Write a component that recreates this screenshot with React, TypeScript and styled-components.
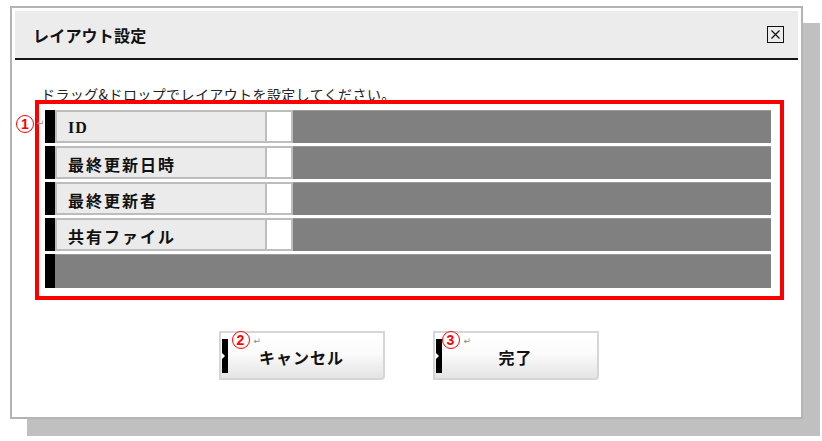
import styled, { createGlobalStyle } from "styled-components";

const GlobalStyle = createGlobalStyle`
  html, body {
    margin: 0;
    background: #fff;
    font-family: "Noto Sans CJK JP", "Noto Sans", sans-serif;
    color: #111;
  }
`;

const fields = ["ID", "最終更新日時", "最終更新者", "共有ファイル"];

export default function App() {
  return (
    <>
      <GlobalStyle />
      <Page>
        <Dialog>
          <Header>
            <Title>レイアウト設定</Title>
            <CloseBox>
              <svg width="13" height="13" viewBox="0 0 13 13">
                <path d="M2.5 2.5 L10.5 10.5 M10.5 2.5 L2.5 10.5" stroke="#111" strokeWidth="1.2" />
              </svg>
            </CloseBox>
          </Header>

          <Body>
            <Hint>ドラッグ&amp;ドロップでレイアウトを設定してください。</Hint>

            <Frame>
              <Marker style={{ left: -23, top: 11 }}>1</Marker>
              <ReturnMark style={{ left: -2, top: 15 }}>↵</ReturnMark>
              {fields.map((f) => (
                <Row key={f}>
                  <Bar />
                  <Label serif={f === "ID"}>{f}</Label>
                  <Blank />
                  <Fill />
                </Row>
              ))}
              <Row last>
                <Bar />
                <Fill />
              </Row>
            </Frame>

            <Buttons>
              <Button>
                <Marker style={{ left: 11, top: -2 }}>2</Marker>
                <ReturnMark style={{ left: 33, top: 4 }}>↵</ReturnMark>
                キャンセル
              </Button>
              <Button>
                <Marker style={{ left: 7, top: -2 }}>3</Marker>
                <ReturnMark style={{ left: 29, top: 4 }}>↵</ReturnMark>
                完了
              </Button>
            </Buttons>
          </Body>
        </Dialog>
      </Page>
    </>
  );
}

const Page = styled.div`
  box-sizing: border-box;
  min-height: 441px;
  padding: 6px 0 0 10px;
`;

const Dialog = styled.div`
  position: relative;
  box-sizing: border-box;
  width: 793px;
  height: 413px;
  border: 2px solid #b4b4b4;
  padding: 3px;
  background: #fff;
  box-shadow: 17px 17px 0 #c0c0c0;
`;

const Header = styled.div`
  height: 47px;
  background: #ececec;
  border-bottom: 2px solid #151515;
  display: flex;
  align-items: center;
  justify-content: space-between;
  padding: 0 14px 0 18px;
`;

const Title = styled.div`
  font-size: 16px;
  font-weight: 700;
  letter-spacing: 0.2px;
`;

const CloseBox = styled.div`
  box-sizing: border-box;
  width: 17px;
  height: 17px;
  border: 1.5px solid #111;
  display: flex;
  align-items: center;
  justify-content: center;
`;

const Body = styled.div`
  padding: 25px 0 0 20px;
`;

const Hint = styled.div`
  font-size: 14px;
  line-height: 18px;
  height: 18px;
  padding-left: 6px;
  letter-spacing: 0.4px;
  color: #222;
  white-space: nowrap;
  overflow: hidden;
`;

const Frame = styled.div`
  position: relative;
  box-sizing: border-box;
  width: 749px;
  margin-top: -3px;
  border: 4px solid #ff0000;
  padding: 6px 9px 8px 6px;
  display: flex;
  flex-direction: column;
  gap: 3px;
  background: #fff;
`;

const Row = styled.div<{ last?: boolean }>`
  display: flex;
  height: ${(p) => (p.last ? "34px" : "33px")};
`;

const Bar = styled.div`
  width: 10px;
  background: #000;
`;

const Label = styled.div<{ serif?: boolean }>`
  box-sizing: border-box;
  width: 212px;
  background: #ebebeb;
  border: 2px solid #bdbdbd;
  padding: 3px 0 0 11px;
  display: flex;
  align-items: center;
  font-family: ${(p) =>
    p.serif ? '"Liberation Serif", serif' : '"Noto Sans CJK JP", sans-serif'};
  font-size: 16px;
  font-weight: 700;
  letter-spacing: ${(p) => (p.serif ? "1px" : "2px")};
  color: #111;
`;

const Blank = styled.div`
  box-sizing: border-box;
  width: 26px;
  background: #fff;
  border: 2px solid #bdbdbd;
  border-left: none;
`;

const Fill = styled.div`
  flex: 1;
  background: #808080;
  border-top: 1px solid #9a9a9a;
`;

const Buttons = styled.div`
  display: flex;
  justify-content: center;
  gap: 48px;
  margin: 31px 0 0 -16px;
`;

const Button = styled.div`
  position: relative;
  box-sizing: border-box;
  width: 166px;
  height: 49px;
  border: 2px solid #d6d6d6;
  border-radius: 0 0 4px 0;
  background: linear-gradient(#ffffff 0%, #fbfbfb 45%, #e4e4e4 100%);
  display: flex;
  align-items: center;
  justify-content: center;
  padding-top: 2px;
  font-size: 16px;
  font-weight: 700;
  letter-spacing: 1px;
  color: #111;

  &::before {
    content: "";
    position: absolute;
    left: 1px;
    top: 6px;
    width: 6px;
    height: 34px;
    background: #000;
  }

  &::after {
    content: "";
    position: absolute;
    left: 1px;
    top: 20px;
    border-top: 3px solid transparent;
    border-bottom: 3px solid transparent;
    border-left: 3px solid #fff;
  }
`;

const Marker = styled.span`
  position: absolute;
  box-sizing: border-box;
  width: 18px;
  height: 18px;
  border: 1.5px solid #ff0000;
  border-radius: 50%;
  background: #fff;
  display: flex;
  align-items: center;
  justify-content: center;
  font-family: "Liberation Sans", sans-serif;
  font-size: 14px;
  font-weight: 700;
  line-height: 1;
  color: #ff0000;
  letter-spacing: 0;
`;

const ReturnMark = styled.span`
  position: absolute;
  font-family: "DejaVu Sans", sans-serif;
  font-size: 9px;
  font-weight: 400;
  line-height: 1;
  color: #888;
  letter-spacing: 0;
`;
